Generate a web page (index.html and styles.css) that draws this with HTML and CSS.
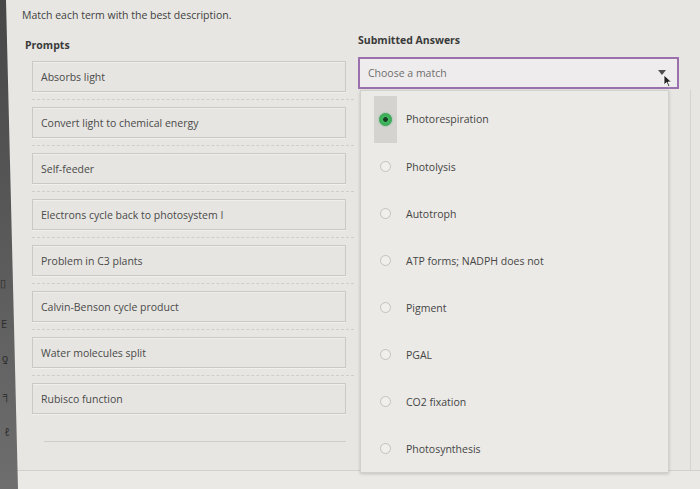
FILE: index.html
```html
<!DOCTYPE html>
<html lang="en">
<head>
<meta charset="utf-8">
<title>Match each term</title>
<link rel="stylesheet" href="styles.css">
</head>
<body>
<div class="strip">
  <span class="mark m1">▯</span>
  <span class="mark m2">E</span>
  <span class="mark m3">ƍ</span>
  <span class="mark m4">╕</span>
  <span class="mark m5">ℓ</span>
</div>
<main class="page">
  <p class="title">Match each term with the best description.</p>
  <div class="cols">
    <section class="prompts">
      <h2 class="label">Prompts</h2>
      <div class="list">
        <div class="prompt">Absorbs light</div>
        <div class="sep"></div>
        <div class="prompt">Convert light to chemical energy</div>
        <div class="sep"></div>
        <div class="prompt">Self-feeder</div>
        <div class="sep"></div>
        <div class="prompt">Electrons cycle back to photosystem I</div>
        <div class="sep"></div>
        <div class="prompt">Problem in C3 plants</div>
        <div class="sep"></div>
        <div class="prompt">Calvin-Benson cycle product</div>
        <div class="sep"></div>
        <div class="prompt">Water molecules split</div>
        <div class="sep"></div>
        <div class="prompt">Rubisco function</div>
        <div class="slot-line"></div>
      </div>
    </section>
    <section class="answers">
      <h2 class="label">Submitted Answers</h2>
      <div class="select">
        <span class="placeholder">Choose a match</span>
        <span class="caret"></span>
        <svg class="cursor" width="10" height="14" viewBox="0 0 10 14"><path d="M1 1 L1 11 L3.5 8.5 L5.5 13 L7 12.3 L5 8 L8.5 8 Z" fill="#222" stroke="#fff" stroke-width="0.8"/></svg>
        <ul class="menu">
          <li class="opt selected"><span class="cell"><span class="radio"></span></span><span class="txt">Photorespiration</span></li>
          <li class="opt"><span class="cell"><span class="radio"></span></span><span class="txt">Photolysis</span></li>
          <li class="opt"><span class="cell"><span class="radio"></span></span><span class="txt">Autotroph</span></li>
          <li class="opt"><span class="cell"><span class="radio"></span></span><span class="txt">ATP forms; NADPH does not</span></li>
          <li class="opt"><span class="cell"><span class="radio"></span></span><span class="txt">Pigment</span></li>
          <li class="opt"><span class="cell"><span class="radio"></span></span><span class="txt">PGAL</span></li>
          <li class="opt"><span class="cell"><span class="radio"></span></span><span class="txt">CO2 fixation</span></li>
          <li class="opt"><span class="cell"><span class="radio"></span></span><span class="txt">Photosynthesis</span></li>
        </ul>
      </div>
    </section>
  </div>
  <footer class="bottom"></footer>
</main>
</body>
</html>
```
FILE: styles.css
```css
* { box-sizing: border-box; }
html, body {
  margin: 0;
  padding: 0;
}
body {
  width: 700px;
  height: 489px;
  overflow: hidden;
  background: #e7e6e2;
  font-family: "Open Sans", "Liberation Sans", sans-serif;
  color: #454545;
  position: relative;
}
.strip {
  position: absolute;
  left: 0;
  top: 0;
  width: 18px;
  height: 489px;
  background: linear-gradient(180deg, #474747 0, #5a5a5a 50%, #6e6e6e 100%);
  clip-path: polygon(0 0, 6px 0, 18px 100%, 0 100%);
  z-index: 2;
}
.mark {
  position: absolute;
  left: 0;
  font-size: 11px;
  line-height: 11px;
  color: #2c2c2c;
}
.m1 { top: 277px; }
.m2 { top: 318px; left: 1px; }
.m3 { top: 352px; left: 2px; }
.m4 { top: 389px; left: 3px; }
.m5 { top: 426px; left: 4px; }
.page {
  height: 489px;
  display: flex;
  flex-direction: column;
  padding-left: 22px;
}
.title {
  margin: 8px 0 0;
  font-size: 10.5px;
  line-height: 14px;
  color: #3f3f3f;
}
.cols {
  display: flex;
  gap: 6px;
  flex: 1;
}
.label {
  margin: 0;
  font-size: 10.5px;
  line-height: 14px;
  font-weight: 700;
  color: #3a3a3a;
}
.prompts {
  width: 330px;
}
.prompts .label {
  margin: 16px 0 9px 3px;
}
.list {
  padding-left: 10px;
  padding-right: 6px;
  display: flex;
  flex-direction: column;
}
.prompt {
  height: 31px;
  display: flex;
  align-items: center;
  padding-left: 8px;
  font-size: 10.5px;
  color: #4a4a4a;
  background: #e6e5e1;
  border: 1px solid #cbc9c4;
  box-shadow: 0 1px 0 #f1f0ed, inset 0 1px 0 #efeeea;
}
.sep {
  height: 0;
  margin: 7px -8px 7px 0;
  border-top: 1px dashed #d0cec9;
}
.slot-line {
  margin: 27px 0 0 12px;
  border-top: 1px solid #cfcdc8;
}
.answers {
  width: 333px;
  position: relative;
}
.answers::after {
  content: "";
  position: absolute;
  right: 0;
  top: 68px;
  bottom: 0;
  border-right: 1px solid #d5d3ce;
}
.answers .label {
  margin: 11px 0 10px;
}
.select {
  position: relative;
  width: 321px;
  height: 32px;
  border: 2px solid #9a71ad;
  background: #efeced;
  display: flex;
  align-items: center;
  padding-left: 8px;
}
.placeholder {
  font-size: 10.5px;
  color: #6e6e6e;
}
.caret {
  position: absolute;
  right: 11px;
  top: 11px;
  width: 0;
  height: 0;
  border-left: 4px solid transparent;
  border-right: 4px solid transparent;
  border-top: 5px solid #4f4f4f;
}
.cursor {
  position: absolute;
  right: 4px;
  top: 15px;
  z-index: 3;
}
.menu {
  position: absolute;
  left: 0;
  top: 31px;
  width: 309px;
  margin: 0;
  padding: 5px 0 0 13px;
  list-style: none;
  background: #ebeae6;
  border: 1px solid #d2d0cb;
  box-shadow: 0 1px 3px rgba(0, 0, 0, 0.18);
  z-index: 1;
}
.opt {
  height: 47px;
  display: flex;
  align-items: center;
  gap: 9px;
}
.cell {
  width: 23px;
  height: 47px;
  display: flex;
  align-items: center;
  justify-content: center;
}
.selected .cell {
  background: #d4d3d0;
}
.radio {
  width: 11px;
  height: 11px;
  border-radius: 50%;
  border: 1px solid #c3c2be;
  background: #f0efeb;
}
.selected .radio {
  width: 13px;
  height: 13px;
  border: 1px solid #2f9e4c;
  background: radial-gradient(circle, #1c3b24 0 2px, #3fb45d 2.6px);
  box-shadow: 0 0 2px rgba(60, 180, 90, 0.7);
}
.txt {
  font-size: 10.5px;
  color: #454545;
}
.selected .txt {
  margin-top: -2px;
}
.bottom {
  height: 19px;
  margin-left: -22px;
  border-top: 1px solid #d3d1cc;
  background: #eae9e6;
}
```
